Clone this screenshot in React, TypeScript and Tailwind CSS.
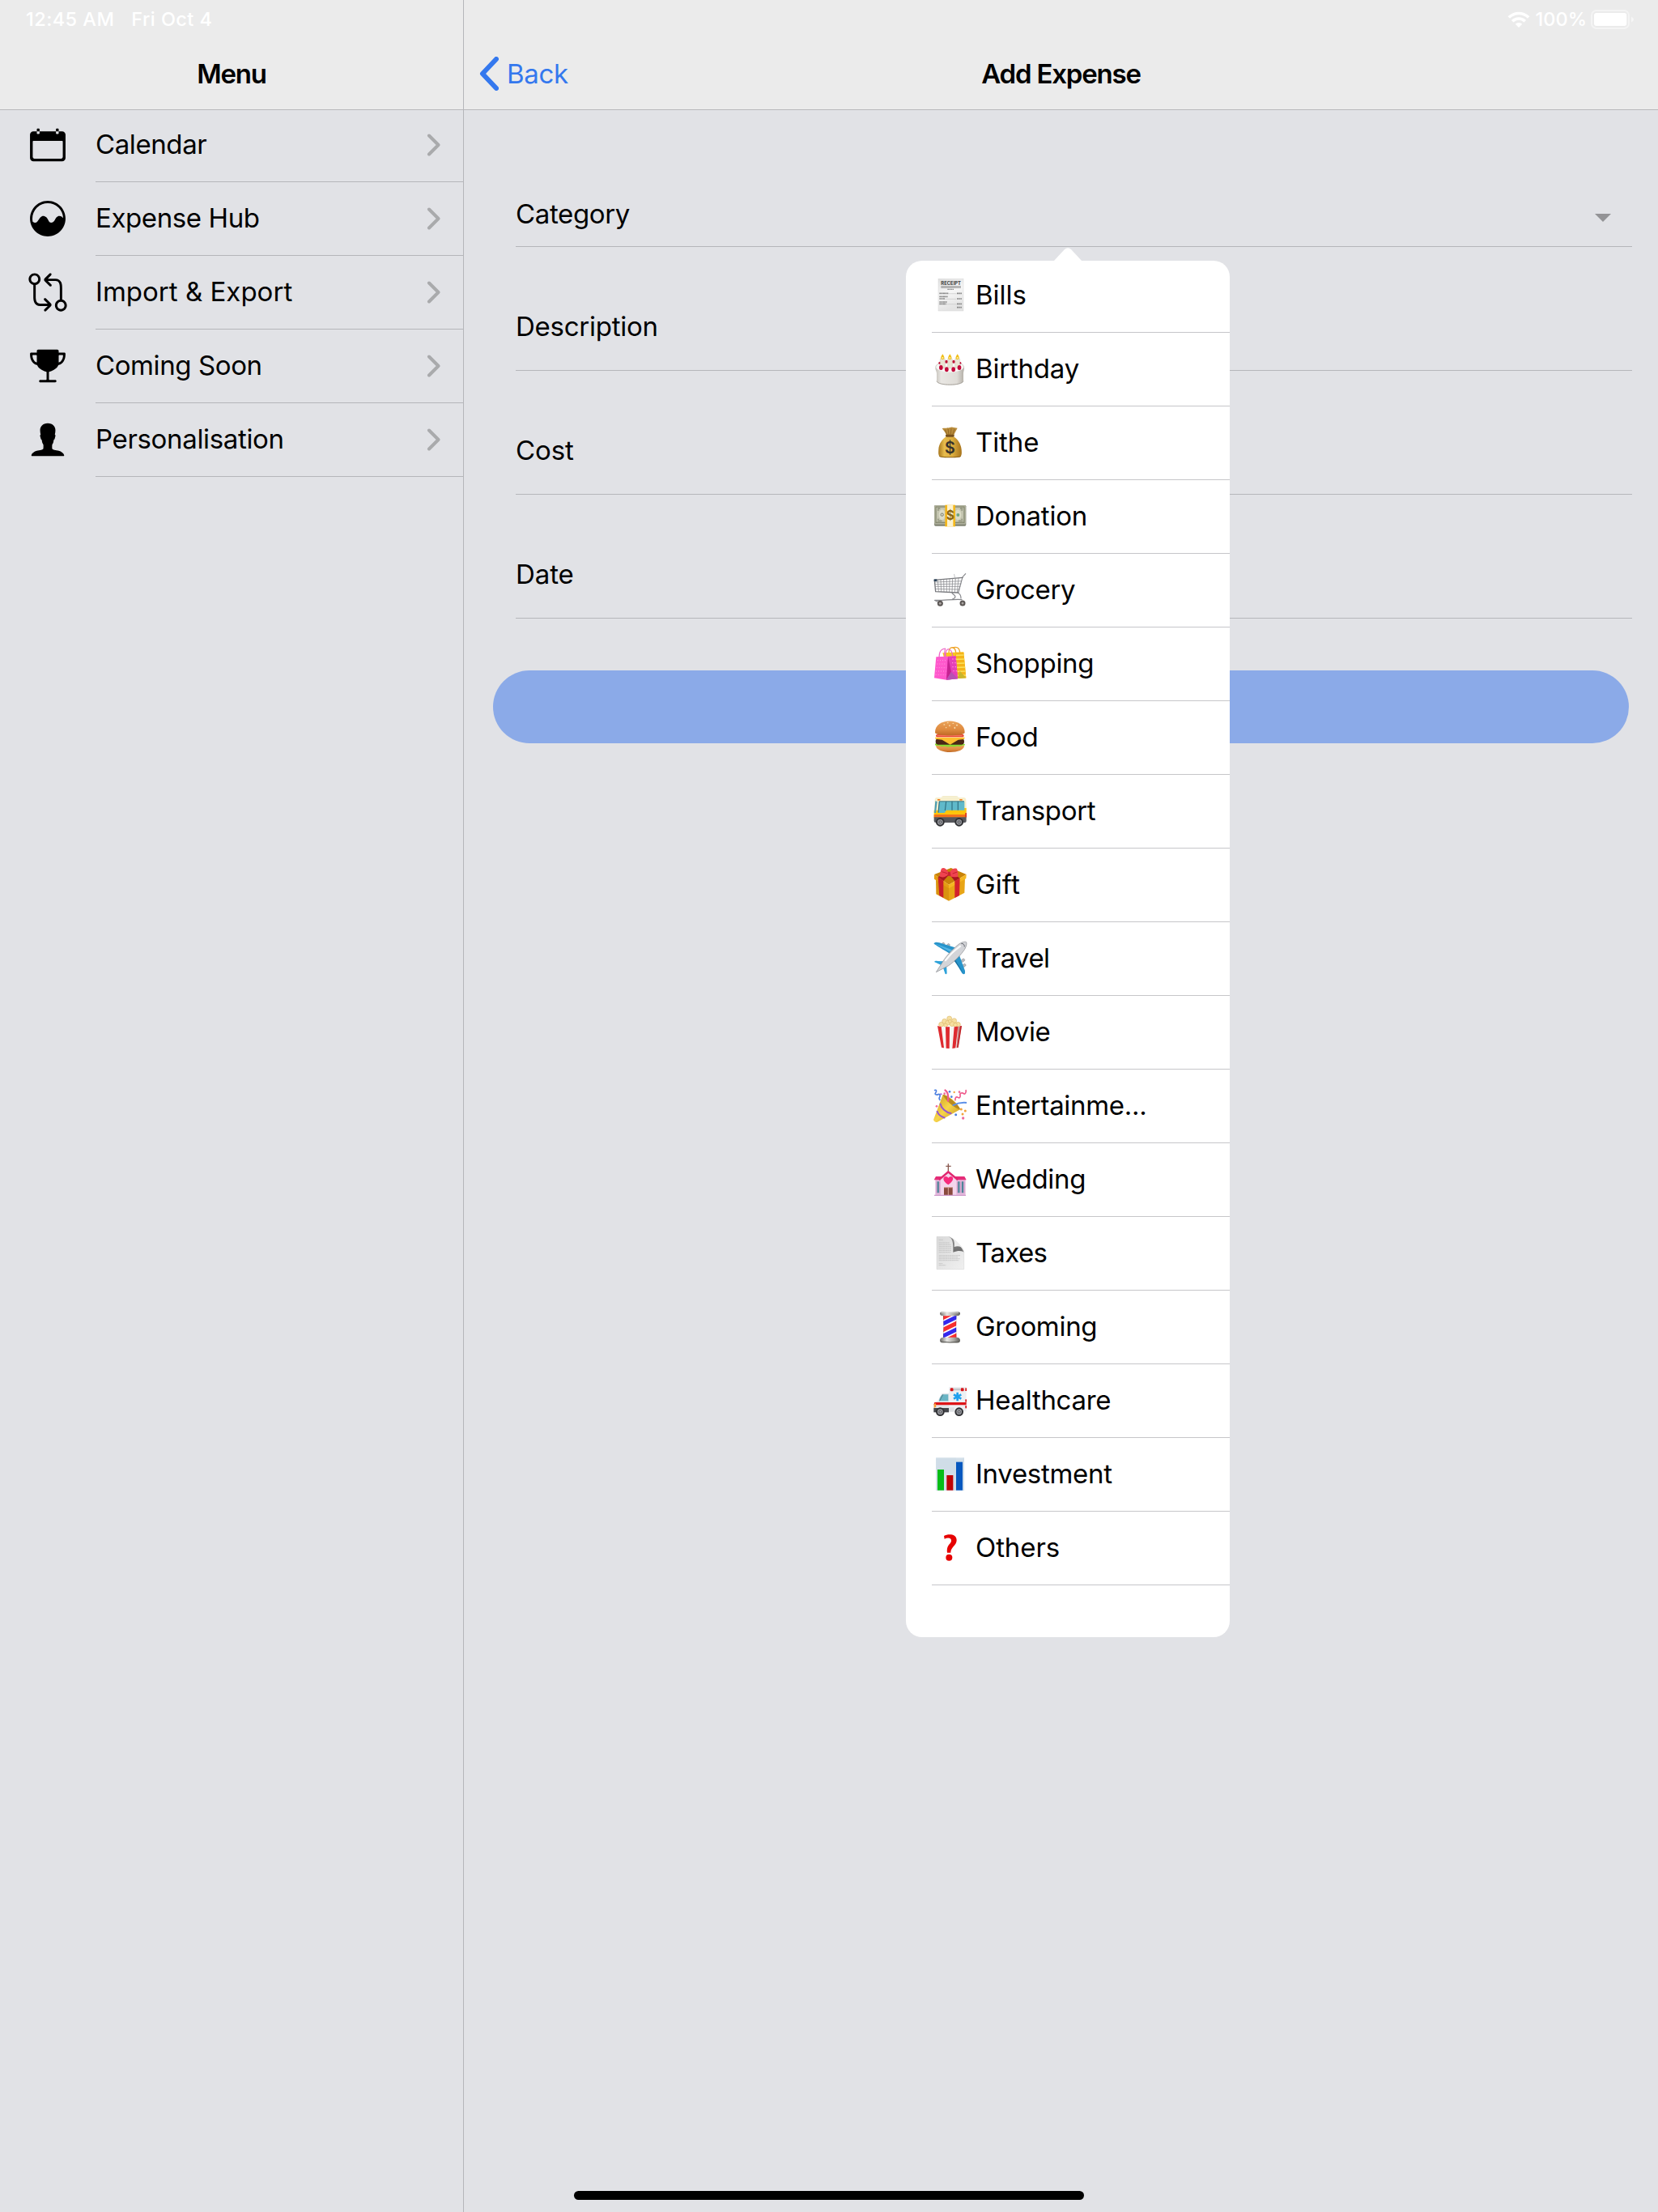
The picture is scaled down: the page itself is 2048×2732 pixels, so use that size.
import React from "react";
import {
  IoIosCalendar,
  IoIosAnalytics,
  IoIosGitCompare,
  IoIosTrophy,
  IoIosPerson,
} from "react-icons/io";

const menu = [
  { label: "Calendar", Icon: IoIosCalendar, tracking: "tracking-[-0.4px]" },
  { label: "Expense Hub", Icon: IoIosAnalytics, tracking: "tracking-[-0.4px]" },
  { label: "Import & Export", Icon: IoIosGitCompare, tracking: "tracking-[0.02px]" },
  { label: "Coming Soon", Icon: IoIosTrophy, tracking: "tracking-[-0.4px]" },
  { label: "Personalisation", Icon: IoIosPerson, tracking: "tracking-[-0.34px]" },
];

function Glyph({ box, children }: { box: string; children: React.ReactNode }) {
  return (
    <svg viewBox={box} className="h-[42px] w-[42px] shrink-0 overflow-visible">
      {children}
    </svg>
  );
}

const Wheel = ({ cx, cy }: { cx: number; cy: number }) => (
  <g>
    <circle cx={cx} cy={cy} r="16" fill="#2f3033" />
    <circle cx={cx} cy={cy} r="10" fill="#9a9ba0" />
    <circle cx={cx} cy={cy} r="6" fill="#55565b" />
    <circle cx={cx} cy={cy} r="2.5" fill="#c8c9cc" />
  </g>
);

const Receipt = () => (
  <Glyph box="219 192 126 126">
    <defs>
      <linearGradient id="paper" x1="0" y1="0" x2="0.3" y2="1">
        <stop offset="0" stopColor="#dedede" />
        <stop offset="0.5" stopColor="#f6f6f6" />
        <stop offset="1" stopColor="#e3e3e3" />
      </linearGradient>
    </defs>
    <rect x="237" y="193" width="93" height="119" fill="url(#paper)" stroke="#d6d6d6" strokeWidth="1.5" />
    <text x="247" y="217" fontSize="17" fontWeight="700" textLength="74" lengthAdjust="spacingAndGlyphs" fontFamily="Inter, sans-serif" fill="#3d3d3d">
      RECEIPT
    </text>
    <path d="M247 221.5h74M247 225.5h74" stroke="#7a7a7a" strokeWidth="2.4" />
    <path d="M271 232h23" stroke="#8b8b8b" strokeWidth="4" strokeDasharray="5 1.5" />
    <path d="M241 247h33M241 259h31M241 267h20M241 279h29M241 286h25M306 247h18M306 267h18M306 286h18M306 299h18" stroke="#8a8a8a" strokeWidth="5" strokeDasharray="6 1" />
    <path d="M275 248h30M262 268h42M267 287h37" stroke="#a9a9a9" strokeWidth="1.6" strokeDasharray="2 1" />
  </Glyph>
);

const Cake = () => (
  <Glyph box="219 465 126 126">
    <defs>
      <linearGradient id="cakeSide" x1="0" x2="1">
        <stop offset="0" stopColor="#c4c0b9" />
        <stop offset="0.2" stopColor="#e9e7e3" />
        <stop offset="0.75" stopColor="#dfdcd7" />
        <stop offset="1" stopColor="#b1ada5" />
      </linearGradient>
    </defs>
    <path d="M226 522c0-32 107-32 107 0 0 10-3 14-3 22v26c0 22-99 22-99 0v-26c0-8-5-12-5-22z" fill="url(#cakeSide)" />
    <path d="M231 572c4 18 94 18 99 0" fill="none" stroke="#a5a19a" strokeWidth="3" />
    <ellipse cx="280" cy="520" rx="51" ry="19" fill="#f8f7f5" />
    <g fill="#c00d35">
      <circle cx="267" cy="500" r="6" /><circle cx="294" cy="500" r="6" /><circle cx="243" cy="505" r="5" /><circle cx="317" cy="505" r="5" />
    </g>
    <g fill="#e9e3d3" stroke="#bfb7a3" strokeWidth="1">
      <rect x="244" y="488" width="18" height="36" rx="3" />
      <rect x="272" y="488" width="17" height="36" rx="3" />
      <rect x="299" y="488" width="18" height="36" rx="3" />
    </g>
    <g fill="#f0bd18">
      <path d="M253 472c9 12 8 20 0 20s-9-8 0-20zM280 472c9 12 8 20 0 20s-9-8 0-20zM308 472c9 12 8 20 0 20s-9-8 0-20z" />
    </g>
    <g fill="#fff3a6">
      <circle cx="253" cy="486" r="3" /><circle cx="280" cy="486" r="3" /><circle cx="308" cy="486" r="3" />
    </g>
    <g fill="#c3083a">
      <ellipse cx="247" cy="522" rx="7" ry="9" /><ellipse cx="268" cy="529" rx="7" ry="9" /><ellipse cx="293" cy="529" rx="7" ry="9" /><ellipse cx="315" cy="522" rx="7" ry="9" />
    </g>
  </Glyph>
);

const MoneyBag = () => (
  <Glyph box="219 738 126 126">
    <defs>
      <linearGradient id="bag" x1="0" x2="1">
        <stop offset="0" stopColor="#a9771d" />
        <stop offset="0.25" stopColor="#e6bb4c" />
        <stop offset="0.6" stopColor="#ddae40" />
        <stop offset="1" stopColor="#a8741b" />
      </linearGradient>
    </defs>
    <path d="M251 748c8-3 14 0 21-3 6 1 11-4 18-2 6 0 12 2 18 3-5 10-10 16-13 27h-28c-3-10-9-17-16-25z" fill="#b98c3c" />
    <path d="M262 752l8 20M273 749l3 22M285 748l-2 22M297 750l-7 20" stroke="#8a6220" strokeWidth="2.5" />
    <path d="M266 778c-14 10-27 26-28 48-1 16-1 24 8 27 14 3 54 3 70 0 9-3 8-14 7-27-2-22-14-38-29-48z" fill="url(#bag)" />
    <path d="M239 848c14 6 70 6 83 0-2 4-5 6-9 6-16 2-50 2-64 0-5-1-8-2-10-6z" fill="#8f6316" />
    <rect x="264" y="770" width="32" height="9" rx="4" fill="#77501c" />
    <text x="280.500" y="839" textAnchor="middle" fontSize="59" fontWeight="600" fontFamily="Inter, sans-serif" fill="#35302b">$</text>
  </Glyph>
);

const Banknote = () => (
  <Glyph box="219 1011 126 126">
    <path d="M222 1036q0-4 4-4h110q3 0 4 4v68q0 5-5 5H227q-5 0-5-5z" fill="#7f8270" />
    <rect x="223" y="1033" width="115" height="67" fill="#c4c5b0" />
    <rect x="228" y="1038" width="105" height="58" fill="none" stroke="#85886f" strokeWidth="4" />
    <path d="M234 1044h10M234 1050h5M318 1044h10M322 1050h5M234 1090h16M312 1090h16M234 1084h5M322 1084h5" stroke="#8b8e78" strokeWidth="4" />
    <ellipse cx="251" cy="1067" rx="12" ry="19" fill="#dcdcc9" />
    <circle cx="251" cy="1067" r="5" fill="none" stroke="#777a68" strokeWidth="3" />
    <ellipse cx="310" cy="1067" rx="12" ry="19" fill="#dadbc6" />
    <circle cx="310" cy="1068" r="6" fill="#6fa47f" />
    <path d="M223 1102h115" stroke="#b5b7a4" strokeWidth="2" />
    <rect x="262" y="1031" width="38" height="80" fill="#f3b71c" />
    <rect x="270" y="1031" width="22" height="80" fill="#fdf3cf" />
    <text x="281" y="1085" textAnchor="middle" fontSize="46" fontWeight="700" fontFamily="Inter, sans-serif" fill="#8a6716">$</text>
  </Glyph>
);

const Cart = () => (
  <Glyph box="159 84 126 126">
    <g fill="none" stroke="#85868a" strokeLinecap="round">
      <path d="M278 86l-11 12-16 58" strokeWidth="3.500" />
      <path d="M163 109l104-9M163 109l4 43 84 4" strokeWidth="4" stroke="#77787c" />
      <path d="M164 117l99-4M165 125l96-2M166 133l92 0M166 142l89 2" strokeWidth="2.200" />
      <path d="M175 109l3 43M186 108l2 44M197 107l1 46M208 106v47M219 105l-1 49M230 104l-2 50M241 103l-3 52M252 102l-5 53" strokeWidth="2.200" />
      <path d="M236 88l4 20" strokeWidth="2" stroke="#a5a6aa" />
      <path d="M228 157c4 6 12 7 12 14 0 6-8 7-10 9M250 157c8 4 11 8 11 20" strokeWidth="3.500" />
      <path d="M164 184c20 3 80-6 100-2" strokeWidth="4" />
      <path d="M168 188l12 2" strokeWidth="3" />
    </g>
    <rect x="161" y="106" width="11" height="8" fill="#2c4359" />
    <circle cx="184" cy="196" r="10.500" fill="#5b5654" />
    <circle cx="184" cy="196" r="4.500" fill="#aaa5a2" />
    <circle cx="267" cy="195" r="10.500" fill="#5b5654" />
    <circle cx="267" cy="195" r="4.500" fill="#aaa5a2" />
  </Glyph>
);

const Bags = () => (
  <Glyph box="159 357 126 126">
    <path d="M193 379l78-3 9 96-60 3z" fill="#f7c71f" />
    <path d="M240 379l31-2 9 95-34 2z" fill="#f5b41a" />
    <path d="M243 388l29-1M243 403l31-1M244 418l31-1M245 433l32-1M245 448l33-1M246 463l33-1" stroke="#fbe05a" strokeWidth="5" />
    <path d="M257 446l23 26-32 2z" fill="#c9b52c" />
    <path d="M216 378c0-26 24-24 26 0M228 360c20-6 28 2 29 18" fill="none" stroke="#efa52c" strokeWidth="4" />
    <path d="M169 394l73-3 7 84-42 4-45-7z" fill="#ff58cc" />
    <path d="M213 393l29-2 7 84-42 4z" fill="#e53fb9" />
    <path d="M213 393l-6 86 18-30z" fill="#c62292" />
    <path d="M225 449l24 26-42 4z" fill="#b750b4" />
    <path d="M174 407h36M172 420h36M170 434h37M168 447h38M167 460h38" stroke="#ff9be2" strokeWidth="3" strokeDasharray="3 6" />
    <path d="M229 402h13M228 416h15M229 431h15M232 446h14" stroke="#ff86dc" strokeWidth="4" strokeDasharray="4 6" />
    <path d="M180 396c0-22 10-33 24-33M204 394c-3-40 24-36 26-3M204 363c-6 8-4 18-2 34" fill="none" stroke="#ee66c6" strokeWidth="3.500" />
  </Glyph>
);

const Burger = () => (
  <Glyph box="159 630 126 126">
    <defs>
      <linearGradient id="bun" x1="0" y1="0" x2="0" y2="1">
        <stop offset="0" stopColor="#eaa35a" />
        <stop offset="0.6" stopColor="#df8b40" />
        <stop offset="1" stopColor="#c06a25" />
      </linearGradient>
    </defs>
    <path d="M168 722h105c2 32-103 34-105 0z" fill="url(#bun)" />
    <path d="M165 716c12-8 100-8 111 2 0 7-10 3-15 6-6 4-12-1-19 2-8 4-14-2-22 1-8 3-16-3-24-1-9 2-12-4-19-3-8 1-14-2-12-7z" fill="#8bd932" />
    <rect x="167" y="696" width="106" height="23" rx="11" fill="#4a2716" />
    <path d="M165 692h110l-2 7-22 2-30 18-30-18-24-3z" fill="#fdbd2e" />
    <rect x="168" y="681" width="104" height="10" rx="5" fill="#e8442f" />
    <path d="M172 685h94" stroke="#f98b74" strokeWidth="2.500" />
    <path d="M165 674c-2-58 112-56 110 0-1 14-109 14-110 0z" fill="url(#bun)" />
    <g fill="#f9dfae">
      <ellipse cx="199" cy="645" rx="3" ry="2.500" /><ellipse cx="212" cy="638" rx="3" ry="2" /><ellipse cx="219" cy="649" rx="2.500" ry="3" /><ellipse cx="232" cy="640" rx="3" ry="2" /><ellipse cx="238" cy="657" rx="2.500" ry="3.500" /><ellipse cx="246" cy="647" rx="3" ry="2.500" /><ellipse cx="206" cy="656" rx="2.500" ry="2" />
    </g>
  </Glyph>
);

const Bus = () => (
  <Glyph box="159 903 126 126">
    <path d="M188 914q2-5 8-5h48q6 0 8 5z" fill="#f3ecc9" />
    <path d="M170 915h103q6 0 7 8l2 50H161l3-50q1-8 6-8z" fill="#f6efcd" />
    <path d="M161 962h14l30-2 6-6h70v35H161z" fill="#fdc50d" />
    <path d="M161 978h120v11H161z" fill="#f4731c" />
    <path d="M166 928l7 2-5 42h-6z" fill="#4e9db3" />
    <path d="M181 929h91q2 0 2 3v30h-67l-7 10h-23l3-40q0-3 1-3z" fill="#5fb9ca" />
    <path d="M206 930l-4 33M228 929v33M250 929v33M181 929l-4 42" stroke="#2e6f80" strokeWidth="3.500" />
    <path d="M181 929.500h92" stroke="#3b7685" strokeWidth="3" />
    <rect x="174" y="921" width="10" height="5" fill="#f07f1e" />
    <rect x="256" y="921" width="10" height="5" fill="#f07f1e" />
    <rect x="277" y="972" width="5" height="16" fill="#d8331f" />
    <path d="M161 988h120v14q0 6-6 6H168q-7 0-7-6z" fill="#55565b" />
    <Wheel cx={184} cy={1006} />
    <Wheel cx={254} cy={1006} />
  </Glyph>
);

const Gift = () => (
  <Glyph box="159 96 126 126">
    <path d="M168 132l48 30v56l-47-25z" fill="#d9930f" />
    <path d="M276 132l-60 30v56l58-30z" fill="#e8a516" />
    <path d="M162 120l62-24 57 24-65 38z" fill="#c98308" />
    <path d="M162 120l54 38v14l-54-35z" fill="#e59d12" />
    <path d="M281 120l-65 38v14l64-37z" fill="#f5b721" />
    <path d="M176 130l20 14v62l-15-8z" fill="#c81f2a" />
    <path d="M257 134l-19 11v62l17-9z" fill="#d3222c" />
    <path d="M176 130l24-14 15 7-19 21zM257 134l-20-14-14 6 15 19z" fill="#a9151f" />
    <path d="M214 112c-8-16-18-18-25-14-4 6-5 20-8 28 9 8 24 4 33-5 4 7 20 12 36 7 2-8-1-20-4-29-10-4-20 2-26 13z" fill="#ef4350" />
    <path d="M213 110l8 0 3 15-13 1z" fill="#c92231" />
    <path d="M190 110l20 6M230 117l17-6" stroke="#c4202e" strokeWidth="3" />
  </Glyph>
);

const Plane = () => (
  <Glyph box="159 369 126 126">
    <g fill="#b9bcc0" stroke="#7e8186" strokeWidth="1.500">
      <rect x="190" y="372" width="9" height="14" rx="4" transform="rotate(35 194 379)" />
      <rect x="209" y="376" width="9" height="14" rx="4" transform="rotate(35 213 383)" />
      <rect x="264" y="431" width="9" height="14" rx="4" transform="rotate(55 268 438)" />
      <rect x="268" y="450" width="9" height="14" rx="4" transform="rotate(55 272 457)" />
    </g>
    <path d="M161 375c4-5 12-5 20-2l58 18-18 22c-16-8-42-24-60-36z" fill="#2794cb" />
    <path d="M163 376l62 33 8-8z" fill="#56b6e4" />
    <path d="M276 487c-4 4-8 3-11-1l-33-56 19-21 25 68z" fill="#2794cb" />
    <path d="M271 488l-36-60-5 4z" fill="#1b6f9f" />
    <path d="M162 444c2-4 8-4 12-3l22 1-8 14zM207 490c-5 0-5-2-6-6l-8-24 14-10 2 36z" fill="#2da2da" />
    <path d="M169 482l28-44c16-24 40-48 58-61 12-8 24-9 26-6s1 14-6 26c-13 20-37 45-60 61z" fill="#d3d4d8" stroke="#85888d" strokeWidth="2" />
    <path d="M204 438c16-20 36-38 54-52" stroke="#fafafa" strokeWidth="7" strokeLinecap="round" />
    <path d="M262 376c8-1 12 5 12 12" fill="none" stroke="#4b4e55" strokeWidth="2.500" />
  </Glyph>
);

const Popcorn = () => (
  <Glyph box="159 642 126 126">
    <g fill="#f6dfa0" stroke="#d7ae5c" strokeWidth="1.500">
      <circle cx="188" cy="676" r="9" /><circle cx="200" cy="664" r="9" /><circle cx="218" cy="654" r="9" /><circle cx="236" cy="662" r="9" /><circle cx="250" cy="676" r="9" /><circle cx="212" cy="670" r="9" /><circle cx="228" cy="674" r="9" /><circle cx="220" cy="664" r="6" /><circle cx="204" cy="679" r="7" /><circle cx="240" cy="677" r="7" />
    </g>
    <path d="M174 681q22 6 46 4 24 2 44-4l-13 80q-30 7-62 0z" fill="#f7f4f2" />
    <path d="M174 681q8 3 14 3l10 79-9-2zM204 685h15l-1 80-12-1zM236 685l14-2-9 80-12 2zM258 682l6-1-13 80-5 1z" fill="#de2a2f" />
    <path d="M250 684l14-3-13 80-7 2z" fill="#a01d20" opacity="0.500" />
  </Glyph>
);

const Party = () => (
  <Glyph box="159 915 126 126">
    <defs>
      <linearGradient id="cone" x1="0" y1="0" x2="1" y2="1">
        <stop offset="0" stopColor="#c8971d" />
        <stop offset="0.5" stopColor="#f7d54a" />
        <stop offset="1" stopColor="#c08e18" />
      </linearGradient>
    </defs>
    <path d="M194 936c22 4 56 30 64 55l-84 46c-8 3-16-2-14-10z" fill="url(#cone)" />
    <path d="M184 968c4 18 20 34 42 38M172 996c4 12 14 22 30 26" fill="none" stroke="#9455cf" strokeWidth="6" />
    <path d="M194 936c10-4 62 38 64 55-20-4-56-34-64-55z" fill="#b98a1c" />
    <path d="M162 920c8-4 10 3 5 9s4 9 9 6 10 4 6 10-1 9 2 12" fill="none" stroke="#4c7fe0" strokeWidth="5" />
    <path d="M200 918c14 6 16 20 13 44" fill="none" stroke="#ef5b8c" strokeWidth="7" />
    <path d="M240 958c-2-12 4-16 10-12s10-2 8-9 8-10 13-5 11-6 8-14" fill="none" stroke="#ef5b8c" strokeWidth="5" />
    <path d="M230 976c16-8 34-12 52-10" fill="none" stroke="#5b8fe8" strokeWidth="6" />
    <g fill="#4c7fe0"><circle cx="219" cy="925" r="4" /><circle cx="226" cy="944" r="4" /><circle cx="242" cy="1010" r="4.500" /></g>
    <g fill="#f06a9c"><circle cx="255" cy="926" r="4" /><circle cx="171" cy="979" r="4" /><circle cx="269" cy="1023" r="5" /><circle cx="200" cy="932" r="4" /></g>
    <g fill="#f2a33a"><circle cx="262" cy="990" r="4.500" /><circle cx="277" cy="996" r="4.500" /><circle cx="267" cy="1008" r="4.500" /><circle cx="236" cy="927" r="3.500" /></g>
    <g fill="#a668da"><circle cx="187" cy="934" r="3.500" /></g>
  </Glyph>
);

const Chapel = () => (
  <Glyph box="159 108 126 126">
    <path d="M214 112v28M205 121h19" stroke="#8a5a50" strokeWidth="4" />
    <path d="M166 170h112v58H166z" fill="#e5b8dc" />
    <path d="M168 159h106l7 13H161z" fill="#e52c78" />
    <path d="M214 142l30 26v63h-58v-63z" fill="#f4d5ec" />
    <path d="M214 137l38 32-5 5-33-27-32 27-5-5z" fill="#e0266f" />
    <path d="M214 190c-26-17-18-31-9-31 5 0 8 3 9 6 2-3 5-6 10-6 9 0 15 14-10 31z" fill="#f82a7c" />
    <path d="M176 178v42M253 178v42M267 178v42" stroke="#4d8598" strokeWidth="7" />
    <path d="M171 178v42M182 178v42M248 178v42M260 178v42M273 178v42" stroke="#c58fbd" strokeWidth="2" />
    <rect x="198" y="199" width="32" height="31" fill="#8a4a3e" />
    <path d="M214 199v31M198 200h32" stroke="#d9a69b" strokeWidth="3" />
    <path d="M162 229h117" stroke="#cf9ccb" strokeWidth="4" />
  </Glyph>
);

const Page = () => (
  <Glyph box="159 381 126 126">
    <defs>
      <linearGradient id="sheet" x1="0" y1="0" x2="1" y2="1">
        <stop offset="0" stopColor="#d9d9d9" />
        <stop offset="1" stopColor="#f0f0f0" />
      </linearGradient>
      <linearGradient id="fold" x1="0" y1="0" x2="0.2" y2="1">
        <stop offset="0" stopColor="#8e8e8e" />
        <stop offset="1" stopColor="#6e6e6e" />
      </linearGradient>
    </defs>
    <path d="M171 382h47c12 6 54 40 54 56v65H171z" fill="url(#sheet)" stroke="#d2d2d2" strokeWidth="1.500" />
    <path d="M214 382c16 6 19 20 18 58 18-8 38-6 40 2-6-20-34-54-58-60z" fill="url(#fold)" />
    <path d="M218 382c18 4 20 22 18 38 16-6 30 0 35 12-6-16-36-46-53-50z" fill="#ececec" />
    <path d="M179 394h15M179 405h40M179 412h44M179 419h46M179 426h46M179 433h46M179 440h44M179 452h80M179 458h70M179 464h78M179 470h74M179 482h14M179 488h26" stroke="#c2c2c2" strokeWidth="2.500" strokeDasharray="7 1" />
  </Glyph>
);

const Barber = () => (
  <Glyph box="159 654 126 126">
    <defs>
      <clipPath id="pole"><path d="M195 672h50q-3 44 0 86h-50q3-42 0-86z" /></clipPath>
      <linearGradient id="steel" x1="0" x2="1">
        <stop offset="0" stopColor="#6b6a66" />
        <stop offset="0.35" stopColor="#e8e7e4" />
        <stop offset="0.7" stopColor="#a8a7a2" />
        <stop offset="1" stopColor="#5e5d59" />
      </linearGradient>
    </defs>
    <g clipPath="url(#pole)">
      <path d="M190 668h60v94h-60z" fill="#fff" />
      <path d="M185 687l70-34M185 732l70-34M185 777l70-34" stroke="#f92f2f" strokeWidth="15" />
      <path d="M185 709l70-34M185 755l70-34" stroke="#3528ee" strokeWidth="15" />
      <path d="M195 672v86" stroke="#000" strokeOpacity="0.250" strokeWidth="6" />
      <path d="M245 672v86" stroke="#000" strokeOpacity="0.250" strokeWidth="6" />
    </g>
    <path d="M183 667q0-7 12-7h51q12 0 12 7 0 9-12 9h-51q-12 0-12-9zM183 767q0-12 14-12h47q14 0 14 12 0 9-14 9h-47q-14 0-14-9z" fill="url(#steel)" />
    <path d="M188 664q32-4 64 0" fill="none" stroke="#f3f3f1" strokeWidth="2.500" />
    <path d="M186 771q34 6 69 0" fill="none" stroke="#5e5d59" strokeWidth="3" />
  </Glyph>
);

const Ambulance = () => (
  <Glyph box="159 927 126 126">
    <path d="M216 941q0-2 3-2h60q2 0 2 3v88h-65z" fill="#eef0f3" />
    <path d="M188 966q3-4 8-4h20v68h-56v-22l8-14 8-4z" fill="#e3e6ea" />
    <path d="M194 967h20v24h-33c-3-6 8-24 13-24z" fill="#69b4c4" />
    <path d="M194 967l-12 24" stroke="#4f7d88" strokeWidth="3" />
    <path d="M163 996h118v10h-121z" fill="#dd1518" />
    <path d="M161 1003l7-4 1 14-8 4z" fill="#f6a13b" />
    <rect x="160" y="1017" width="56" height="16" fill="#44464b" />
    <rect x="216" y="1015" width="20" height="16" fill="#dfe1e4" />
    <g fill="#d5161a">
      <rect x="221" y="943" width="12" height="12" rx="4" /><rect x="260" y="943" width="12" height="12" rx="4" /><rect x="277" y="943" width="5" height="11" /><rect x="277" y="985" width="5" height="10" /><rect x="277" y="1008" width="5" height="10" />
    </g>
    <path d="M234 944h24v8h-24z" fill="#c4c7cb" />
    <path d="M248 959v32M234 967l28 16M234 983l28-16" stroke="#1ea0ee" strokeWidth="8" />
    <Wheel cx={184} cy={1031} />
    <Wheel cx={254} cy={1031} />
  </Glyph>
);

const Chart = () => (
  <Glyph box="159 180 126 126">
    <rect x="168" y="181" width="105" height="122" fill="#d5e1eb" />
    <path d="M174 181v122M180 181v122M186 181v122M192 181v122M198 181v122M204 181v122M210 181v122M216 181v122M222 181v122M228 181v122M234 181v122M240 181v122M270 181v122M168 187h105M168 193h105M168 199h105M168 205h105M168 211h105M168 217h105M168 223h105M168 229h105M168 235h105" stroke="#c6d3e0" strokeWidth="1" />
    <rect x="174" y="225" width="24" height="77" fill="#06bd17" />
    <rect x="208" y="246" width="24" height="56" fill="#bf0407" />
    <rect x="243" y="197" width="24" height="105" fill="#0758bf" />
  </Glyph>
);

const Question = () => (
  <Glyph box="159 453 126 126">
    <path d="M198 471c14-8 47-9 47 16 0 20-22 25-22 46h-13c-3-32 15-31 15-45 0-11-14-11-25-6z" fill="#e60202" />
    <circle cx="217" cy="551" r="12" fill="#e60202" />
  </Glyph>
);

const categories = [
  { label: "Bills", Icon: Receipt, tracking: "tracking-normal" },
  { label: "Birthday", Icon: Cake, tracking: "tracking-[-0.2px]" },
  { label: "Tithe", Icon: MoneyBag, tracking: "tracking-[-0.1px]" },
  { label: "Donation", Icon: Banknote, tracking: "tracking-[-0.2px]" },
  { label: "Grocery", Icon: Cart, tracking: "tracking-[-0.4px]" },
  { label: "Shopping", Icon: Bags, tracking: "tracking-[-0.3px]" },
  { label: "Food", Icon: Burger, tracking: "tracking-[-0.1px]" },
  { label: "Transport", Icon: Bus, tracking: "tracking-[-0.3px]" },
  { label: "Gift", Icon: Gift, tracking: "tracking-[0.1px]" },
  { label: "Travel", Icon: Plane, tracking: "tracking-[-0.6px]" },
  { label: "Movie", Icon: Popcorn, tracking: "tracking-[-0.5px]" },
  { label: "Entertainme...", Icon: Party, tracking: "tracking-[-0.3px]" },
  { label: "Wedding", Icon: Chapel, tracking: "tracking-[-0.3px]" },
  { label: "Taxes", Icon: Page, tracking: "tracking-[-0.6px]" },
  { label: "Grooming", Icon: Barber, tracking: "tracking-[-0.3px]" },
  { label: "Healthcare", Icon: Ambulance, tracking: "tracking-[-0.3px]" },
  { label: "Investment", Icon: Chart, tracking: "tracking-[-0.3px]" },
  { label: "Others", Icon: Question, tracking: "tracking-[-0.1px]" },
];

const fields = [
  { label: "Description", tracking: "tracking-[-0.25px]" },
  { label: "Cost", tracking: "tracking-[-0.1px]" },
  { label: "Date", tracking: "tracking-[-0.1px]" },
];

export default function App() {
  return (
    <div className="relative flex h-[2732px] w-[2048px] overflow-hidden bg-[#e1e2e6] font-['Inter',sans-serif] text-[33px] leading-[40px] text-black">
      <aside className="flex w-[573px] shrink-0 flex-col border-r border-[#b5b6ba]">
        <header className="flex h-[136px] shrink-0 flex-col border-b border-[#b8b8bb] bg-[#ebebeb]">
          <div className="flex h-[47px] items-center gap-[21px] pl-8 text-[23.500px] font-medium text-white">
            <span className="tracking-[0.45px]">12:45 AM</span>
            <span className="tracking-[0.45px]">Fri Oct 4</span>
          </div>
          <h1 className="flex h-[88px] items-center justify-center font-semibold tracking-[-1.200px]">Menu</h1>
        </header>
        <nav className="-mt-[2px]">
          {menu.map(({ label, Icon, tracking }) => (
            <div key={label} className="flex h-[91px] items-center pl-8">
              <Icon className="mr-8 mb-[2px] h-[54px] w-[54px] shrink-0" />
              <div className="flex h-full flex-1 items-center justify-between border-b border-[#b5b6ba] pr-[27px]">
                <span className={`pb-[2px] ${tracking}`}>{label}</span>
                <svg viewBox="0 0 18 28" className="h-7 w-[18px]">
                  <path d="M3 2.500L14.500 14 3 25.500" fill="none" stroke="#a9aaac" strokeWidth="4" strokeLinecap="round" strokeLinejoin="round" />
                </svg>
              </div>
            </div>
          ))}
        </nav>
      </aside>

      <main className="flex flex-1 flex-col">
        <header className="flex h-[136px] shrink-0 flex-col border-b border-[#b8b8bb] bg-[#ebebeb]">
          <div className="flex h-[47px] items-center justify-end pr-[30px] text-white">
            <svg viewBox="0 0 28 20" className="mr-[7px] h-5 w-7">
              <path d="M14 20l-4.200-4.200a6 6 0 0 1 8.400 0z" fill="#fff" />
              <path d="M6.200 12.200a11 11 0 0 1 15.600 0M1.800 7.500a17.300 17.300 0 0 1 24.400 0" fill="none" stroke="#fff" strokeWidth="3.600" />
            </svg>
            <span className="mr-[5px] text-[23.500px] font-medium">100%</span>
            <svg viewBox="0 0 53 24" className="h-6 w-[53px]">
              <rect x="1" y="1" width="46" height="22" rx="6" fill="none" stroke="#f4f4f4" strokeWidth="2" />
              <rect x="4" y="4" width="40.300" height="16" rx="3" fill="#fff" />
              <path d="M50 8.500q3 1.500 3 3.500t-3 3.500z" fill="#f6f6f6" />
            </svg>
          </div>
          <div className="grid h-[88px] grid-cols-3 items-center">
            <div className="flex items-center pl-[19px] text-[#3478ee]">
              <svg viewBox="0 0 24 42" className="mr-[10px] h-[42px] w-6">
                <path d="M21 3L4 21l17 18" fill="none" stroke="currentColor" strokeWidth="6" strokeLinecap="round" strokeLinejoin="round" />
              </svg>
              <span className="tracking-[-0.3px]">Back</span>
            </div>
            <h1 className="text-center font-semibold tracking-[-1.200px]">Add Expense</h1>
          </div>
        </header>

        <form className="flex flex-col pl-16 pr-8">
          <div className="flex h-[169px] items-end justify-between border-b border-[#b5b6ba] pb-5 pr-[26px]">
            <label className="tracking-[-0.35px]">Category</label>
            <svg viewBox="0 0 20 10" className="mb-[10px] h-[10px] w-5">
              <path d="M0 0h20L10 10z" fill="#939396" />
            </svg>
          </div>
          {fields.map(({ label, tracking }) => (
            <div key={label} className="flex h-[153px] items-end border-b border-[#b5b6ba] pb-[34px]">
              <label className={tracking}>{label}</label>
            </div>
          ))}
          <div className="-ml-[28px] mr-[4px] mt-[64px] h-[90px] rounded-full bg-[#8baae8]" />
        </form>
      </main>

      <div className="absolute left-[1119px] top-[322px] h-[1700px] w-[400px] rounded-[20px] bg-white">
        <svg viewBox="0 0 36 17" className="absolute -top-[16px] left-[182px] h-[17px] w-9">
          <path d="M0 17L13.500 2.500q4.500-4.500 9 0L36 17z" fill="#fff" />
        </svg>
        <ul className="-mt-[2px] pl-8">
          {categories.map(({ label, Icon, tracking }) => (
            <li key={label} className="flex h-[91px] items-center gap-[10px] border-b border-[#c6c6c9] pl-[2px]">
              <Icon />
              <span className={`pb-[2px] ${tracking}`}>{label}</span>
            </li>
          ))}
        </ul>
      </div>

      <div className="absolute left-[709px] top-[2706px] h-[11px] w-[630px] rounded-full bg-black" />
    </div>
  );
}
